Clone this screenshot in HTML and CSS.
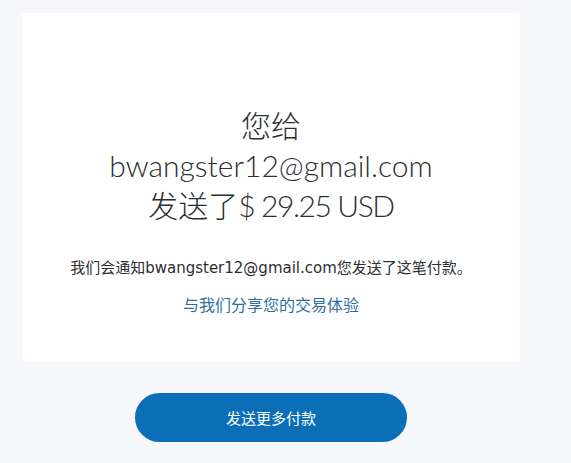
FILE: index.html
```html
<!DOCTYPE html>
<html lang="zh-CN">
<head>
    <meta charset="UTF-8">
    <meta name="viewport" content="width=device-width, initial-scale=1.0">
    <title>付款已发送</title>
    <link rel="stylesheet" href="styles.css">
</head>
<body>
    <div class="card-done">
        <h1 class="done-title">
            <span>您给</span>
            <span>bwangster12@gmail.com</span>
            <span>发送了<span class="amount">$ 29.25 USD</span></span>
        </h1>
        <p class="text-note">我们会通知bwangster12@gmail.com您发送了这笔付款。</p>
        <a class="link-share" href="#">与我们分享您的交易体验</a>
    </div>

    <div class="actions">
        <a class="btn-more" href="#">发送更多付款</a>
    </div>
</body>
</html>
```

FILE: styles.css
```css
body {
    font-family: 'Lato', 'Noto Sans CJK SC', sans-serif;
    margin: 0;
    padding: 13px 0 0 22px;
    min-height: 100vh;
    box-sizing: border-box;
    background: #f5f7fa;
    color: #2c2e2f;
}

.card-done {
    background: #ffffff;
    width: 498px;
    height: 349px;
    box-sizing: border-box;
    padding-top: 92px;
    display: flex;
    flex-direction: column;
    align-items: center;
    border-radius: 3px;
}

.done-title {
    margin: 0;
    display: flex;
    flex-direction: column;
    align-items: center;
    font-size: 30px;
    font-weight: 300;
    line-height: 40px;
}

.amount {
    font-weight: 300;
    letter-spacing: -1.4px;
}

.text-note {
    margin: 33px 0 0;
    font-family: 'DejaVu Sans', 'Noto Sans CJK SC', sans-serif;
    font-size: 15px;
    line-height: 20px;
    color: #2c2e2f;
}

.link-share {
    margin-top: 16px;
    font-family: 'Noto Sans CJK SC', sans-serif;
    font-size: 16px;
    line-height: 20px;
    color: #2f6f9e;
    text-decoration: none;
}

.actions {
    width: 498px;
    display: flex;
    justify-content: center;
    padding-top: 31px;
}

.btn-more {
    width: 272px;
    height: 49px;
    border-radius: 25px;
    background: #0a6fb6;
    color: #ffffff;
    font-family: 'Noto Sans CJK SC', sans-serif;
    font-size: 15px;
    text-decoration: none;
    display: flex;
    align-items: center;
    justify-content: center;
}
```
